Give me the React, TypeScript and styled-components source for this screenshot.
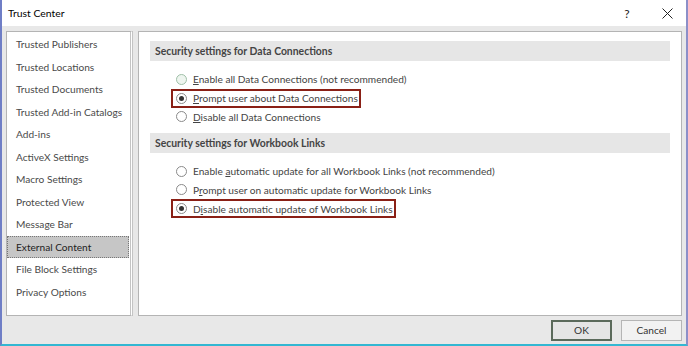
import React from 'react';
import styled, { createGlobalStyle, css } from 'styled-components';

const GlobalStyle = createGlobalStyle`
  html, body {
    margin: 0;
    padding: 0;
    background: #ffffff;
  }
  body {
    font-family: Lato, 'Noto Sans', sans-serif;
  }
`;

const Window = styled.div`
  width: 688px;
  height: 346px;
  box-sizing: border-box;
  display: flex;
  flex-direction: column;
  background: #e8e8e8;
  border-left: 2px solid #6f7ec6;
  border-right: 2px solid #8c8fc8;
  border-bottom: 2px solid #33b7d2;
  font-size: 10.15px;
  color: #444;
`;

const TitleBar = styled.div`
  height: 26px;
  flex: none;
  display: flex;
  align-items: center;
  background: #ffffff;
  padding-left: 6px;
`;

const Title = styled.div`
  flex: 1;
  color: #000;
  font-size: 10.4px;
`;

const TitleButton = styled.div`
  width: 38px;
  height: 26px;
  display: flex;
  align-items: center;
  justify-content: center;
  color: #222;
  font-size: 12px;
  margin-left: 2px;
`;

const Body = styled.div`
  flex: 1;
  display: flex;
  gap: 5px;
  padding: 5px 4px 0 4px;
  min-height: 0;
`;

const Panel = styled.div`
  background: #ffffff;
  border: 1px solid #b4b4b4;
  box-sizing: border-box;
  height: 285px;
`;

const Nav = styled(Panel)`
  width: 127px;
  flex: none;
  padding: 1px 1px 0 0;
  border-right: 3px double #c4c4c4;
`;

const NavItem = styled.div<{ selected?: boolean }>`
  height: 22.5px;
  display: flex;
  align-items: center;
  padding-left: 9px;
  white-space: nowrap;
  box-sizing: border-box;
  color: #4a4a4a;
  ${(p) =>
    p.selected &&
    css`
      background: #c6c6c6;
      border: 1px dotted #777;
      padding-left: 8px;
      color: #222;
    `}
`;

const Content = styled(Panel)`
  flex: 1;
  padding: 9px 11px 0 11px;
`;

const SectionHeader = styled.div`
  height: 20px;
  display: flex;
  align-items: center;
  padding-left: 5px;
  background: #e6e6e6;
  font-weight: 700;
  font-size: 10.4px;
  color: #444;
  margin-bottom: 9px;
`;

const Options = styled.div`
  display: flex;
  flex-direction: column;
  padding-left: 21px;
  margin-bottom: 7px;
`;

const Option = styled.div<{ highlight?: boolean }>`
  height: 18.5px;
  display: flex;
  align-items: center;
  gap: 6px;
  align-self: flex-start;
  box-sizing: border-box;
  padding: 0 1px 0 3px;
  border: 2px solid transparent;
  white-space: nowrap;
  color: #444;
  ${(p) =>
    p.highlight &&
    css`
      border-color: #8a2016;
      height: 19px;
    `}
`;

const Radio = styled.span<{ checked?: boolean; hover?: boolean }>`
  width: 11px;
  height: 11px;
  border-radius: 50%;
  box-sizing: border-box;
  border: 1px solid ${(p) => (p.hover ? '#9fc0a8' : '#8a8a8a')};
  background: ${(p) => (p.hover ? '#eef5ef' : '#fff')};
  display: flex;
  align-items: center;
  justify-content: center;
  flex: none;
  &::after {
    content: '';
    width: 5px;
    height: 5px;
    border-radius: 50%;
    background: #333;
    display: ${(p) => (p.checked ? 'block' : 'none')};
  }
`;

const Footer = styled.div`
  height: 28px;
  flex: none;
  display: flex;
  justify-content: flex-end;
  align-items: center;
  gap: 9px;
  padding-right: 4px;
`;

const Button = styled.div<{ primary?: boolean }>`
  width: 61px;
  height: 21px;
  box-sizing: border-box;
  display: flex;
  align-items: center;
  justify-content: center;
  background: ${(p) => (p.primary ? '#e5e5e5' : '#f2f2f2')};
  border: ${(p) => (p.primary ? '2px solid #5b6a5b' : '1px solid #b5b5b5')};
  color: #333;
`;

const navItems = [
  'Trusted Publishers',
  'Trusted Locations',
  'Trusted Documents',
  'Trusted Add-in Catalogs',
  'Add-ins',
  'ActiveX Settings',
  'Macro Settings',
  'Protected View',
  'Message Bar',
  'External Content',
  'File Block Settings',
  'Privacy Options',
];

// underline the access key letter
function accel(text: string, index: number) {
  return (
    <span>
      {text.slice(0, index)}
      <u>{text[index]}</u>
      {text.slice(index + 1)}
    </span>
  );
}

export default function App() {
  return (
    <>
      <GlobalStyle />
      <Window>
        <TitleBar>
          <Title>Trust Center</Title>
          <TitleButton>?</TitleButton>
          <TitleButton>
            <svg width="11" height="11" viewBox="0 0 11 11">
              <path d="M0.5 0.5L10.5 10.5M10.5 0.5L0.5 10.5" stroke="#222" strokeWidth="1" />
            </svg>
          </TitleButton>
        </TitleBar>
        <Body>
          <Nav>
            {navItems.map((item) => (
              <NavItem key={item} selected={item === 'External Content'}>
                {item}
              </NavItem>
            ))}
          </Nav>
          <Content>
            <SectionHeader>Security settings for Data Connections</SectionHeader>
            <Options>
              <Option>
                <Radio hover />
                {accel('Enable all Data Connections (not recommended)', 0)}
              </Option>
              <Option highlight>
                <Radio checked />
                {accel('Prompt user about Data Connections', 0)}
              </Option>
              <Option>
                <Radio />
                {accel('Disable all Data Connections', 0)}
              </Option>
            </Options>
            <SectionHeader>Security settings for Workbook Links</SectionHeader>
            <Options>
              <Option>
                <Radio />
                {accel('Enable automatic update for all Workbook Links (not recommended)', 7)}
              </Option>
              <Option>
                <Radio />
                {accel('Prompt user on automatic update for Workbook Links', 1)}
              </Option>
              <Option highlight>
                <Radio checked />
                {accel('Disable automatic update of Workbook Links', 1)}
              </Option>
            </Options>
          </Content>
        </Body>
        <Footer>
          <Button primary>OK</Button>
          <Button>Cancel</Button>
        </Footer>
      </Window>
    </>
  );
}
